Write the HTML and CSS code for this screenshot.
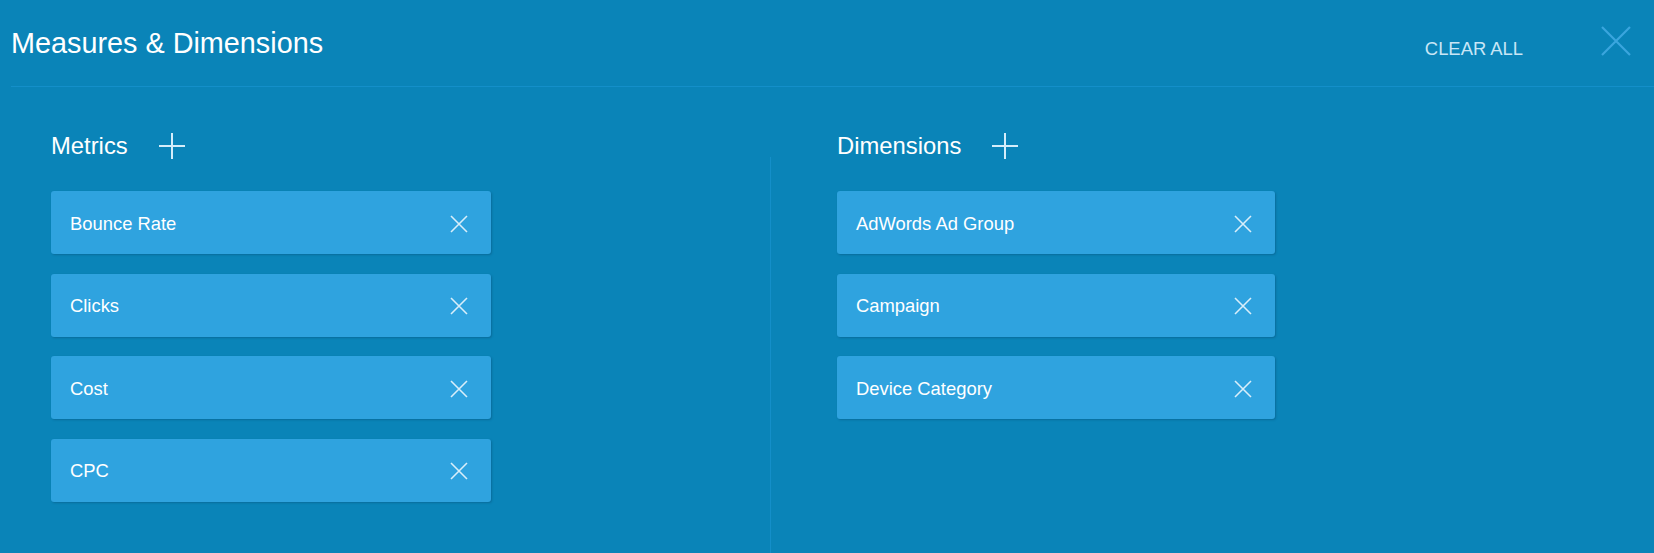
FILE: index.html
```html
<!DOCTYPE html>
<html lang="en">
<head>
  <meta charset="UTF-8">
  <meta name="viewport" content="width=device-width, initial-scale=1.0">
  <title>Measures &amp; Dimensions</title>
  <link rel="stylesheet" href="styles.css">
</head>
<body>
  <div class="panel-header">
    <h1 class="panel-title">Measures &amp; Dimensions</h1>
    <button class="clear-all">CLEAR ALL</button>
    <button class="close-btn" aria-label="Close">
      <svg width="30" height="30" viewBox="0 0 30 30"><path d="M1 1L29 29M29 1L1 29" stroke="currentColor" stroke-width="2.2" fill="none"/></svg>
    </button>
  </div>

  <div class="panel-body">
    <!-- metrics -->
    <div class="column column-left">
      <div class="column-head">
        <h2>Metrics</h2>
        <button class="add-btn" aria-label="Add metric">
          <svg width="26" height="26" viewBox="0 0 26 26"><path d="M13 0V26M0 13H26" stroke="currentColor" stroke-width="2" fill="none"/></svg>
        </button>
      </div>
      <div class="chip-list">
        <div class="chip"><span>Bounce Rate</span><button class="chip-remove" aria-label="Remove"><svg width="18" height="18" viewBox="0 0 18 18"><path d="M1 1L17 17M17 1L1 17" stroke="currentColor" stroke-width="1.6" fill="none"/></svg></button></div>
        <div class="chip"><span>Clicks</span><button class="chip-remove" aria-label="Remove"><svg width="18" height="18" viewBox="0 0 18 18"><path d="M1 1L17 17M17 1L1 17" stroke="currentColor" stroke-width="1.6" fill="none"/></svg></button></div>
        <div class="chip"><span>Cost</span><button class="chip-remove" aria-label="Remove"><svg width="18" height="18" viewBox="0 0 18 18"><path d="M1 1L17 17M17 1L1 17" stroke="currentColor" stroke-width="1.6" fill="none"/></svg></button></div>
        <div class="chip"><span>CPC</span><button class="chip-remove" aria-label="Remove"><svg width="18" height="18" viewBox="0 0 18 18"><path d="M1 1L17 17M17 1L1 17" stroke="currentColor" stroke-width="1.6" fill="none"/></svg></button></div>
      </div>
    </div>

    <div class="column-divider"></div>

    <!-- dimensions -->
    <div class="column column-right">
      <div class="column-head">
        <h2>Dimensions</h2>
        <button class="add-btn" aria-label="Add dimension">
          <svg width="26" height="26" viewBox="0 0 26 26"><path d="M13 0V26M0 13H26" stroke="currentColor" stroke-width="2" fill="none"/></svg>
        </button>
      </div>
      <div class="chip-list">
        <div class="chip"><span>AdWords Ad Group</span><button class="chip-remove" aria-label="Remove"><svg width="18" height="18" viewBox="0 0 18 18"><path d="M1 1L17 17M17 1L1 17" stroke="currentColor" stroke-width="1.6" fill="none"/></svg></button></div>
        <div class="chip"><span>Campaign</span><button class="chip-remove" aria-label="Remove"><svg width="18" height="18" viewBox="0 0 18 18"><path d="M1 1L17 17M17 1L1 17" stroke="currentColor" stroke-width="1.6" fill="none"/></svg></button></div>
        <div class="chip"><span>Device Category</span><button class="chip-remove" aria-label="Remove"><svg width="18" height="18" viewBox="0 0 18 18"><path d="M1 1L17 17M17 1L1 17" stroke="currentColor" stroke-width="1.6" fill="none"/></svg></button></div>
      </div>
    </div>
  </div>
</body>
</html>
```

FILE: styles.css
```css
:root {
  --bg: #0a84b8;
  --line: #148fc9;
  --chip: #2fa3df;
  --text: #ffffff;
}
html, body {
  height: 100%;
}
body {
  margin: 0;
  background: var(--bg);
  color: var(--text);
  font-family: "Liberation Sans", Arial, sans-serif;
  overflow: hidden;
}
button {
  font-family: inherit;
  background: none;
  border: none;
  padding: 0;
  cursor: pointer;
}

/* header */
.panel-header {
  display: flex;
  align-items: flex-start;
  height: 87px;
  margin-left: 11px;
  border-bottom: 1px solid var(--line);
  box-sizing: border-box;
}
.panel-title {
  margin: 27px 0 0 0;
  font-size: 28.8px;
  line-height: 32px;
  font-weight: 400;
}
.clear-all {
  margin: 39px 0 0 auto;
  font-size: 18.4px;
  line-height: 20px;
  color: #c8e6f6;
}
.close-btn {
  margin: 26px 23px 0 78px;
  width: 30px;
  height: 30px;
  color: #3aa6de;
}
.close-btn svg {
  display: block;
}

/* body */
.panel-body {
  display: flex;
  height: calc(100% - 87px);
  padding-left: 51px;
}
.column {
  padding-top: 45px;
}
.column-left {
  width: 719px;
}
.column-right {
  padding-left: 66px;
}
.column-divider {
  width: 1px;
  margin-top: 70px;
  background: var(--line);
}
.column-head {
  display: flex;
  align-items: center;
  height: 28px;
  margin-bottom: 31px;
}
.column-head h2 {
  margin: 0;
  font-size: 23.8px;
  line-height: 28px;
  font-weight: 400;
}
.add-btn {
  margin-left: 31px;
  width: 26px;
  height: 26px;
  color: #d4edfa;
}
.add-btn svg {
  display: block;
}

.chip-list {
  display: flex;
  flex-direction: column;
  gap: 19.6px;
}
.chip {
  display: flex;
  align-items: center;
  justify-content: space-between;
  width: 440px;
  height: 63px;
  box-sizing: border-box;
  padding: 2px 23px 0 19px;
  background: var(--chip);
  border-radius: 3px;
  box-shadow: 1px 1px 2px rgba(0, 40, 70, 0.25);
  font-size: 18.4px;
}
.column-right .chip {
  width: 438px;
}
.chip-remove {
  width: 18px;
  height: 18px;
  color: #d8eefa;
}
.chip-remove svg {
  display: block;
}
```
